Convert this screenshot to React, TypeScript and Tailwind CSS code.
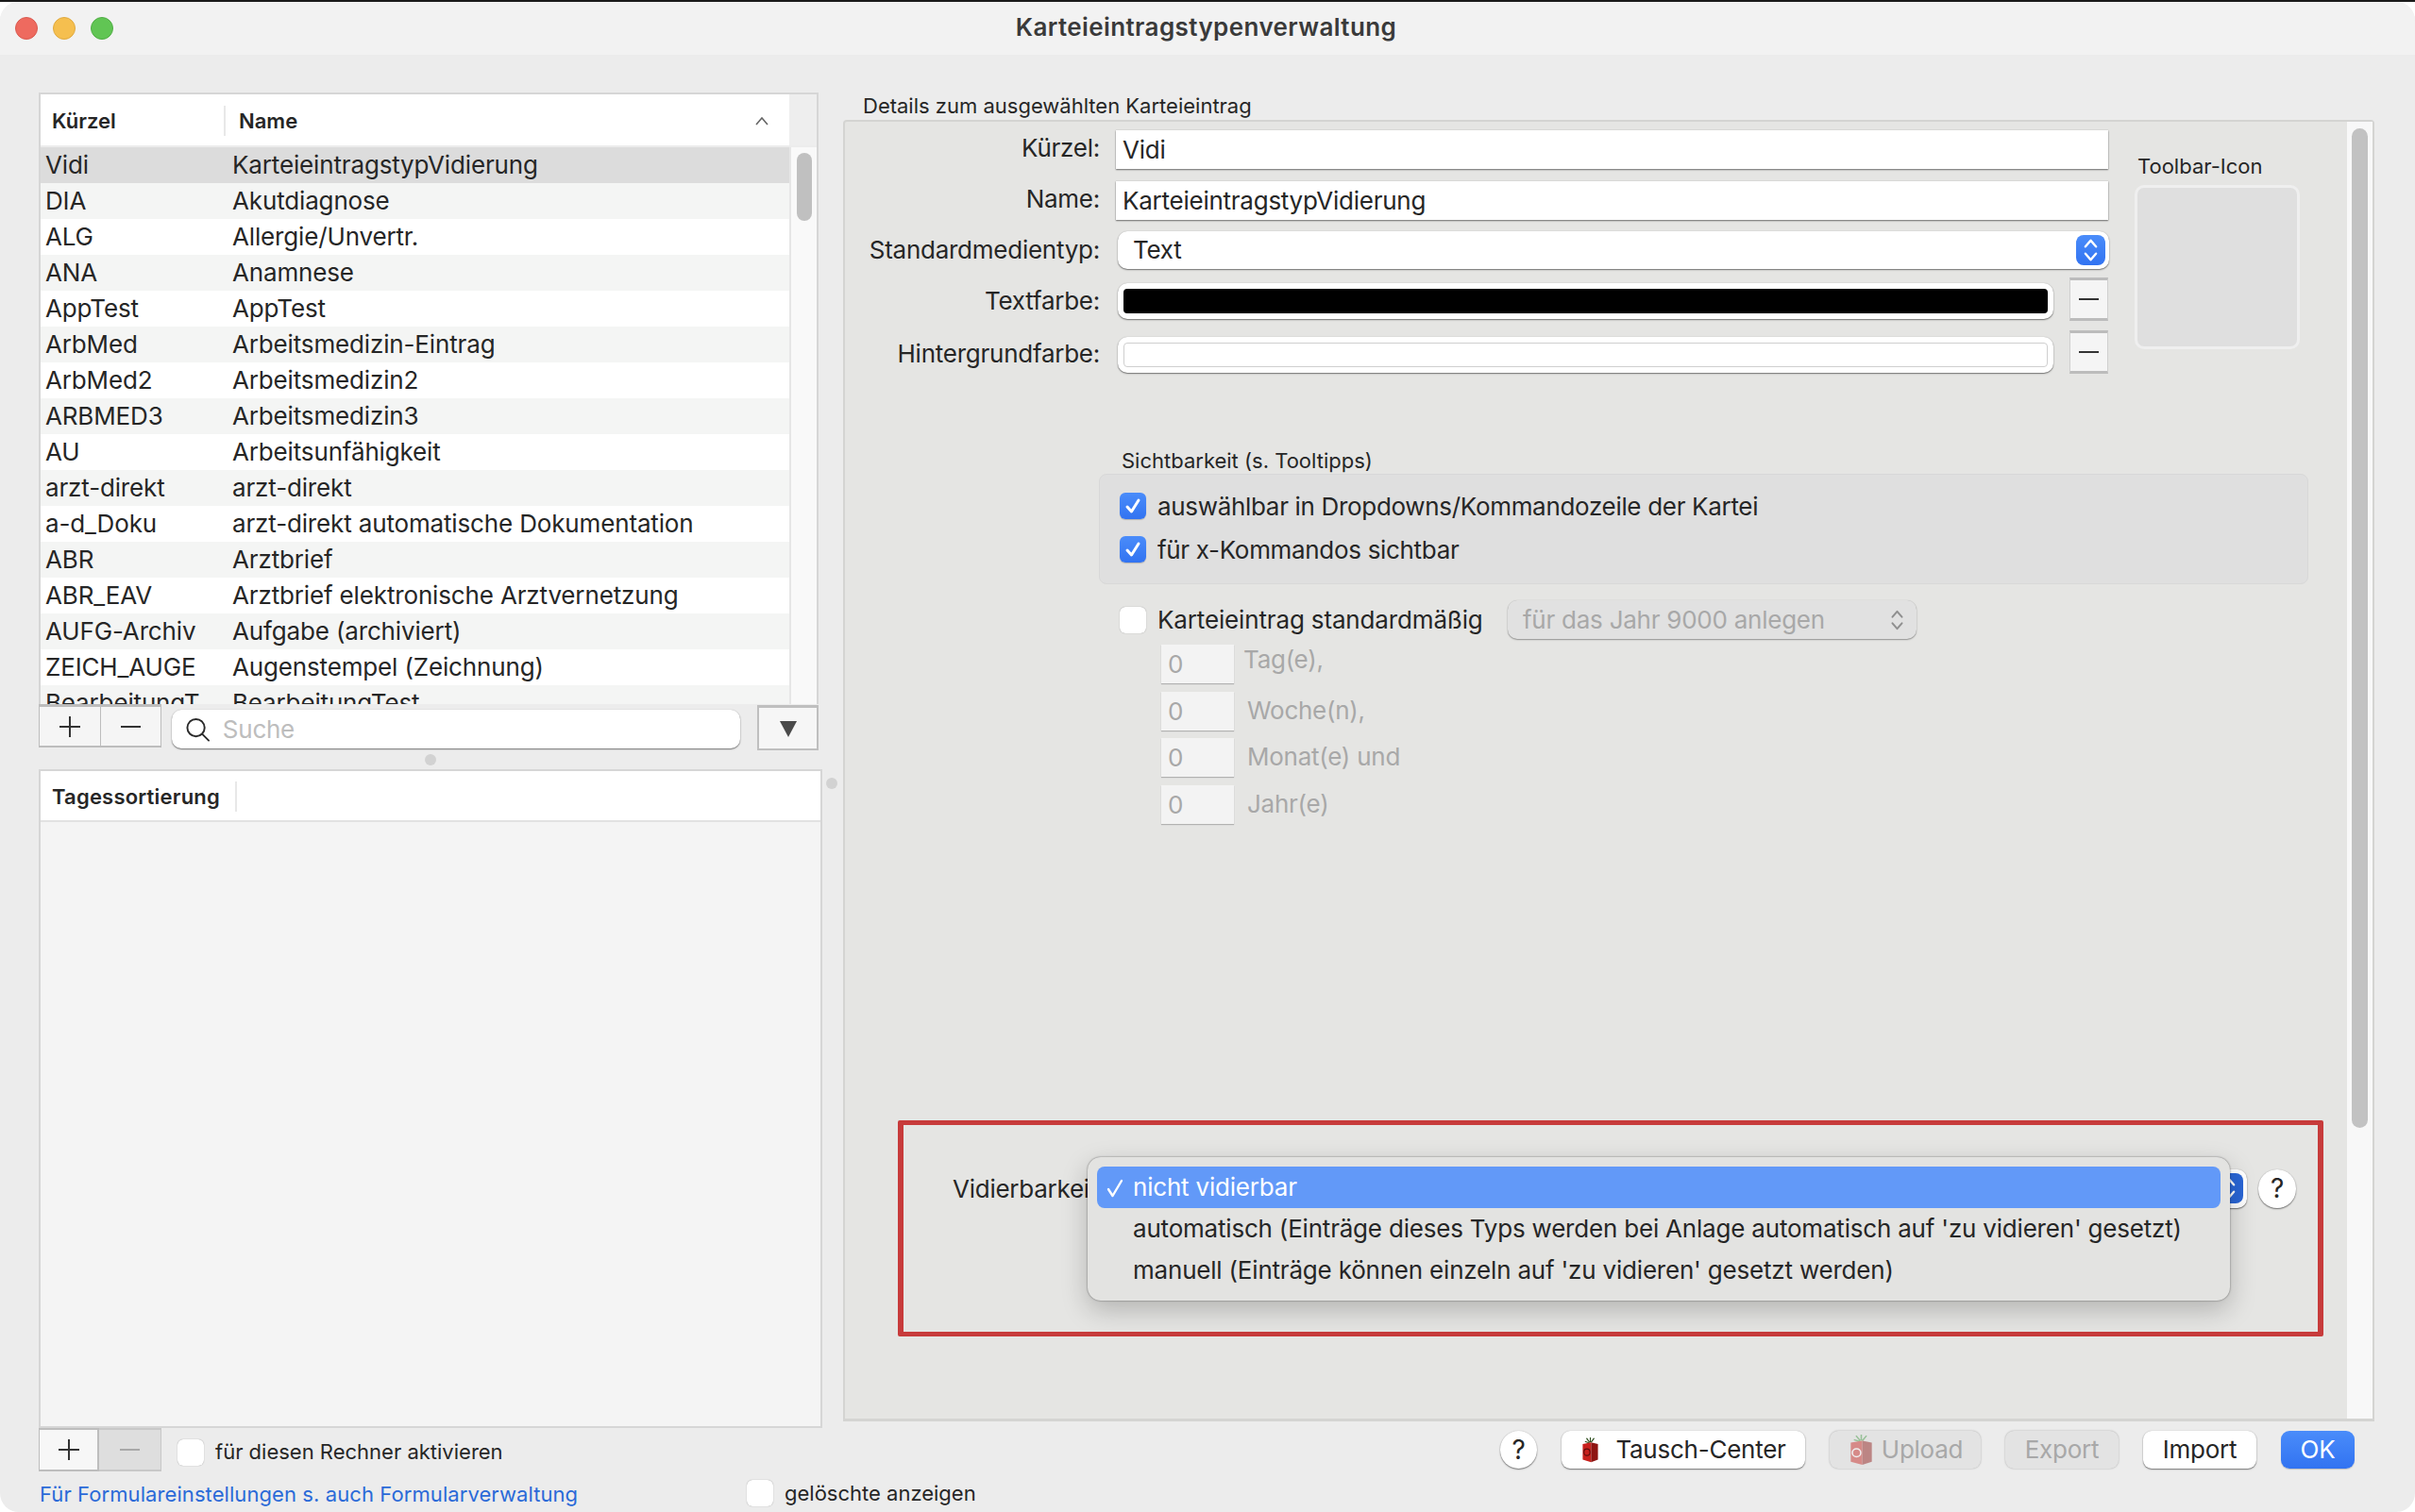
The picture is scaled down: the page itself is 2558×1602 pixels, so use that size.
import React from "react";

const rows: [string, string][] = [
  ["Vidi", "KarteieintragstypVidierung"],
  ["DIA", "Akutdiagnose"],
  ["ALG", "Allergie/Unvertr."],
  ["ANA", "Anamnese"],
  ["AppTest", "AppTest"],
  ["ArbMed", "Arbeitsmedizin-Eintrag"],
  ["ArbMed2", "Arbeitsmedizin2"],
  ["ARBMED3", "Arbeitsmedizin3"],
  ["AU", "Arbeitsunfähigkeit"],
  ["arzt-direkt", "arzt-direkt"],
  ["a-d_Doku", "arzt-direkt automatische Dokumentation"],
  ["ABR", "Arztbrief"],
  ["ABR_EAV", "Arztbrief elektronische Arztvernetzung"],
  ["AUFG-Archiv", "Aufgabe (archiviert)"],
  ["ZEICH_AUGE", "Augenstempel (Zeichnung)"],
  ["BearbeitungT", "BearbeitungTest"],
];

const fieldShadow = "shadow-[0_1px_1.5px_rgba(0,0,0,0.5),0_0_1px_rgba(0,0,0,0.25)]";

function Chevrons({ color, w = 18, h = 30, sw = 2.6 }: { color: string; w?: number; h?: number; sw?: number }) {
  return (
    <svg width={w} height={h} viewBox="0 0 18 30" fill="none" stroke={color} strokeWidth={sw} strokeLinecap="round" strokeLinejoin="round">
      <path d="M3 11 L9 4 L15 11" />
      <path d="M3 19 L9 26 L15 19" />
    </svg>
  );
}

function Stepper({ dark }: { dark?: boolean }) {
  return (
    <div className={`w-[31px] h-[32px] rounded-[8px] flex items-center justify-center ${dark ? "bg-[#2a66d6]" : "bg-gradient-to-b from-[#4a8cfa] to-[#3273f1]"}`}>
      <Chevrons color="#ffffff" w={17} h={28} />
    </div>
  );
}

function Check({ checked }: { checked?: boolean }) {
  return checked ? (
    <div className="w-[28px] h-[28px] rounded-[6px] bg-gradient-to-b from-[#4a8cfa] to-[#3273f1] flex items-center justify-center shadow-[0_1px_1px_rgba(0,0,0,0.2)] shrink-0">
      <svg width="20" height="20" viewBox="0 0 20 20" fill="none" stroke="#ffffff" strokeWidth="3" strokeLinecap="round" strokeLinejoin="round">
        <path d="M4 11 L8.5 16 L16 4" />
      </svg>
    </div>
  ) : (
    <div className="w-[28px] h-[28px] rounded-[6px] bg-white shadow-[0_0_1px_rgba(0,0,0,0.45)] shrink-0" />
  );
}

function Label({ children, cls = "" }: { children: React.ReactNode; cls?: string }) {
  return <div className={`w-[288px] shrink-0 pr-[18px] text-right text-[26px] leading-[32px] text-[#262626] whitespace-nowrap ${cls}`}>{children}</div>;
}

function DisabledNumber({ label, labelClass }: { label: string; labelClass: string }) {
  return (
    <div className="flex items-center h-[41px]">
      <div className="w-[77px] h-[41px] bg-[#f3f3f3] shadow-[0_1px_1px_rgba(0,0,0,0.22)] flex items-center pl-[7px] text-[26px] text-[#a8a8a8]">0</div>
      <div className={`text-[26px] leading-[32px] text-[#a8a8a8] ${labelClass}`}>{label}</div>
    </div>
  );
}

function MinusBtn() {
  return (
    <div className="w-[41px] h-[46px] bg-[#f5f5f5] border-y-[3px] border-x border-[#bcbcbc] border-x-[#cfcfcf] flex items-center justify-center ml-[17px] shrink-0">
      <div className="w-[21px] h-[2px] bg-[#333333]" />
    </div>
  );
}

function Footer({ w, cls, children }: { w: number; cls: string; children: React.ReactNode }) {
  return (
    <div style={{ width: w }} className={`h-[40px] rounded-[9px] flex items-center justify-center text-[26px] leading-[32px] shrink-0 ${cls}`}>
      {children}
    </div>
  );
}

function Cube({ faded }: { faded?: boolean }) {
  return (
    <svg width={faded ? 29 : 21} height={faded ? 34 : 28} viewBox="0 0 26 32" preserveAspectRatio="none" className={faded ? "opacity-45 mr-[7px]" : "mr-[16px]"}>
      <path d="M13 1 L13 7 M8 2 L12 7 M18 2 L14 7 M6 6 L12 8" stroke={faded ? "#3f9a3f" : "#2f4f1f"} strokeWidth="1.4" fill="none" />
      <path d="M3 9 L14 7 L14 31 L3 28 Z" fill="#c8201c" />
      <path d="M14 7 L23 9 L23 28 L14 31 Z" fill="#8e1512" />
      <circle cx="8.5" cy="19" r="4" fill="none" stroke={faded ? "#ffffff" : "#5c0d0b"} strokeWidth="1.4" />
    </svg>
  );
}

export default function App() {
  return (
    <div className="w-[2558px] h-[1602px] bg-white overflow-hidden font-[family-name:Inter] text-[#262626] tracking-[-0.25px]">
      <div className="w-full h-[2px] bg-[#1a1a1a]" />
      <div className="w-[2558px] h-[1600px] bg-[#ececec] rounded-[20px] overflow-hidden flex flex-col">
        {/* Title bar */}
        <div className="h-[56px] bg-[#f2f2f2] flex items-center shrink-0 relative">
          <div className="flex gap-[16px] pl-[16px]">
            <div className="w-[24px] h-[24px] rounded-full bg-[#ee6a5f] border border-[#d95a50]" />
            <div className="w-[24px] h-[24px] rounded-full bg-[#f5bf4f] border border-[#dfa93f]" />
            <div className="w-[24px] h-[24px] rounded-full bg-[#61c554] border border-[#50ad45]" />
          </div>
          <div className="flex-1 text-center text-[26px] font-semibold text-[#3a3a3a] pr-[123px] mt-[-3px] tracking-[0.4px]">Karteieintragstypenverwaltung</div>
        </div>

        {/* Body */}
        <div className="flex flex-1 pl-[41px]">
          {/* Left column */}
          <div className="w-[830px] shrink-0 flex flex-col pt-[40px]">
            <div className="w-[826px] h-[648px] border-2 border-b-0 border-[#d6d6d6] flex flex-col overflow-hidden box-border">
              <div className="flex h-[54px] shrink-0 tracking-normal">
                <div className="w-[793px] bg-white flex items-center relative pt-[2px]">
                  <div className="w-[196px] pl-[12px] text-[22px] font-semibold text-[#262626] border-r-2 border-[#e8e8e8] h-[32px] flex items-center">Kürzel</div>
                  <div className="pl-[14px] text-[22px] font-semibold text-[#262626]">Name</div>
                  <svg width="16" height="10" viewBox="0 0 16 10" fill="none" stroke="#666666" strokeWidth="1.6" className="absolute left-[756px] top-[23px]">
                    <path d="M2 9 L8 2 L14 9" />
                  </svg>
                </div>
                <div className="flex-1 bg-[#eeeeee]" />
              </div>
              <div className="flex flex-1 mt-[2px] min-h-0">
                <div className="w-[793px] overflow-hidden tracking-[-0.15px]">
                  {rows.map((r, i) => (
                    <div key={r[0]} className={`h-[38px] flex items-center pl-[5px] text-[26px] leading-[38px] text-[#262626] whitespace-nowrap ${i === 0 ? "bg-[#dcdcdc]" : i % 2 === 1 ? "bg-[#f4f5f4]" : "bg-white"}`}>
                      <div className="w-[198px] shrink-0">{r[0]}</div>
                      <div>{r[1]}</div>
                    </div>
                  ))}
                </div>
                <div className="flex-1 bg-[#f9f9f9] border-l-2 border-[#e6e6e6] pl-[6px] pt-[6px]">
                  <div className="w-[16px] h-[72px] rounded-full bg-[#c0c0c0]" />
                </div>
              </div>
            </div>

            {/* list toolbar */}
            <div className="w-[826px] flex items-start h-[49px]">
              <div className="flex w-[130px] h-[46px] bg-[#f5f5f5] border-t-[3px] border-b-[2px] border-x border-[#bdbdbd]">
                <div className="w-[65px] flex items-center justify-center border-r border-[#bdbdbd]">
                  <svg width="22" height="22" viewBox="0 0 22 22" stroke="#333333" strokeWidth="2"><path d="M11 0 V22 M0 11 H22" /></svg>
                </div>
                <div className="flex-1 flex items-center justify-center">
                  <div className="w-[21px] h-[2px] bg-[#333333]" />
                </div>
              </div>
              <div className={`ml-[11px] mt-[6px] w-[603px] h-[41px] bg-white rounded-[10px] flex items-center pl-[14px] ${fieldShadow}`}>
                <svg width="27" height="28" viewBox="0 0 28 28" fill="none" stroke="#2b2b2b" strokeWidth="2">
                  <circle cx="12" cy="12" r="9.5" />
                  <path d="M19 19 L26 26" strokeLinecap="round" />
                </svg>
                <span className="ml-[13px] text-[26px] text-[#bdbdbd]">Suche</span>
              </div>
              <div className="ml-[18px] mt-[1px] w-[65px] h-[48px] bg-[#f6f6f6] border-2 border-t-[3px] border-[#bfbfbf] flex items-center justify-center">
                <svg width="18" height="18" viewBox="0 0 18 18"><path d="M0 1 H18 L9 18 Z" fill="#4a4a4a" /></svg>
              </div>
            </div>

            <div className="h-[20px] flex items-center pl-[409px]">
              <div className="w-[12px] h-[12px] rounded-full bg-[#d2d2d2]" />
            </div>

            {/* Tagessortierung */}
            <div className="w-[830px] h-[698px] border-2 border-[#d6d6d6] bg-[#f4f4f4] flex flex-col box-border tracking-normal">
              <div className="h-[54px] bg-white border-b-2 border-[#e2e2e2] flex items-center shrink-0 pt-[2px]">
                <div className="pl-[12px] pr-[16px] h-[32px] flex items-center text-[22px] font-semibold text-[#262626] border-r-2 border-[#e8e8e8] whitespace-nowrap tracking-[0.2px]">Tagessortierung</div>
              </div>
            </div>

            {/* Bottom left controls */}
            <div className="flex items-center h-[46px] tracking-normal">
              <div className="flex h-[46px]">
                <div className="w-[64px] bg-[#f7f7f7] border-y-[2px] border-r-2 border-l border-[#bdbdbd] flex items-center justify-center">
                  <svg width="22" height="22" viewBox="0 0 22 22" stroke="#333333" strokeWidth="2"><path d="M11 0 V22 M0 11 H22" /></svg>
                </div>
                <div className="w-[66px] bg-[#dedede] border-y-[2px] border-r border-[#c8c8c8] flex items-center justify-center">
                  <div className="w-[21px] h-[2px] bg-[#a8a8a8]" />
                </div>
              </div>
              <div className="ml-[17px] mt-[6px]"><Check /></div>
              <div className="ml-[12px] text-[22px] text-[#262626] mt-[5px] whitespace-nowrap">für diesen Rechner aktivieren</div>
            </div>
            <div className="flex items-center h-[37px] pt-[9px] tracking-normal">
              <div className="w-[750px] shrink-0 pl-[1px] text-[22px] text-[#2a6ad8] whitespace-nowrap tracking-[0.08px] mt-[3px]">Für Formulareinstellungen s. auch Formularverwaltung</div>
              <Check />
              <div className="ml-[12px] text-[22px] text-[#262626] whitespace-nowrap">gelöschte anzeigen</div>
            </div>
          </div>

          {/* Gap column with splitter dot */}
          <div className="w-[22px] shrink-0 pt-[766px] pl-[4px]">
            <div className="w-[12px] h-[12px] rounded-full bg-[#d2d2d2]" />
          </div>

          {/* Right column */}
          <div className="w-[1622px] shrink-0 flex flex-col pt-[41px]">
            <div className="h-[28px] pl-[21px] text-[22px] leading-[26px] text-[#262626] whitespace-nowrap tracking-normal">Details zum ausgewählten Karteieintrag</div>
            <div className="h-[1379px] bg-[#e5e5e3] border-2 border-[#d4d4d2] border-b-[3px] rounded-t-[4px] flex box-border">
              <div className="flex-1 flex flex-col min-w-0">
                {/* Top form + Toolbar icon */}
                <div className="flex">
                  <div className="flex flex-col w-[1339px] pt-[9px]">
                    <div className="flex items-center h-[41px]">
                      <Label cls="mt-[-3px]">Kürzel:</Label>
                      <div className={`w-[1051px] ml-[-1px] h-[41px] bg-white flex items-center pl-[7px] text-[26px] ${fieldShadow}`}>Vidi</div>
                    </div>
                    <div className="flex items-center h-[41px] mt-[13px]">
                      <Label cls="mt-[-3px]">Name:</Label>
                      <div className={`w-[1051px] ml-[-1px] h-[41px] bg-white flex items-center pl-[7px] text-[26px] ${fieldShadow}`}>KarteieintragstypVidierung</div>
                    </div>
                    <div className="flex items-center h-[40px] mt-[12px]">
                      <Label>Standardmedientyp:</Label>
                      <div className={`w-[1050px] ml-[1px] h-[40px] bg-white rounded-[10px] flex items-center justify-between pl-[16px] pr-[4px] text-[26px] ${fieldShadow}`}>
                        <span className="mt-[-2px]">Text</span>
                        <Stepper />
                      </div>
                    </div>
                    <div className="flex items-center h-[46px] mt-[9px]">
                      <Label cls="mt-[4px]">Textfarbe:</Label>
                      <div className={`w-[991px] ml-[1px] mt-[4px] h-[38px] bg-white rounded-[10px] p-[6px] ${fieldShadow}`}>
                        <div className="w-full h-full bg-black rounded-[4px]" />
                      </div>
                      <MinusBtn />
                    </div>
                    <div className="flex items-center h-[46px] mt-[10px]">
                      <Label cls="mt-[4px]">Hintergrundfarbe:</Label>
                      <div className={`w-[991px] ml-[1px] mt-[6px] h-[38px] bg-white rounded-[10px] p-[6px] ${fieldShadow}`}>
                        <div className="w-full h-full bg-white border border-[#cfcfcf] rounded-[4px]" />
                      </div>
                      <MinusBtn />
                    </div>
                  </div>
                  <div className="ml-[27px] pt-[31px] flex flex-col tracking-normal">
                    <div className="h-[36px] pl-[3px] text-[22px] leading-[32px] text-[#262626] whitespace-nowrap">Toolbar-Icon</div>
                    <div className="w-[175px] h-[174px] bg-[#dfdfdf] border-[3px] border-[#efefef] rounded-[10px]" />
                  </div>
                </div>

                {/* Sichtbarkeit */}
                <div className="ml-[293px] mt-[78px] h-[28px] text-[22px] leading-[28px] text-[#262626] whitespace-nowrap tracking-normal">Sichtbarkeit (s. Tooltipps)</div>
                <div className="ml-[269px] w-[1281px] h-[117px] bg-[#dfdfdf] border border-[#d8d8d8] rounded-[8px] pl-[21px] pt-[19px] flex flex-col gap-[18px]">
                  <div className="flex items-center h-[28px]"><Check checked /><span className="ml-[12px] text-[26px] whitespace-nowrap tracking-[-0.32px]">auswählbar in Dropdowns/Kommandozeile der Kartei</span></div>
                  <div className="flex items-center h-[28px]"><Check checked /><span className="ml-[12px] text-[26px] whitespace-nowrap tracking-[-0.32px]">für x-Kommandos sichtbar</span></div>
                </div>

                {/* Standardmäßig */}
                <div className="ml-[291px] mt-[17px] flex items-center h-[41px]">
                  <Check />
                  <span className="ml-[12px] w-[371px] shrink-0 text-[26px] whitespace-nowrap tracking-[-0.15px] mt-[-1px]">Karteieintrag standardmäßig</span>
                  <div className="w-[433px] h-[41px] bg-[#e1e1e1] rounded-[10px] shadow-[0_1px_1.5px_rgba(0,0,0,0.35),0_0_1px_rgba(0,0,0,0.2)] flex items-center justify-between pl-[16px] pr-[13px] text-[26px] text-[#a8a8a8]">
                    <span className="whitespace-nowrap mt-[-1px]">für das Jahr 9000 anlegen</span>
                    <Chevrons color="#8f8f8f" w={15} h={26} sw={2.4} />
                  </div>
                </div>
                <div className="ml-[335px] mt-[6px] flex flex-col gap-[8.67px]">
                  <DisabledNumber label="Tag(e)," labelClass="ml-[10px] mt-[-10px]" />
                  <DisabledNumber label="Woche(n)," labelClass="ml-[14px]" />
                  <DisabledNumber label="Monat(e) und" labelClass="ml-[14px] mt-[-1px]" />
                  <DisabledNumber label="Jahr(e)" labelClass="ml-[14px]" />
                </div>

                {/* Red annotation */}
                <div className="ml-[56px] mt-[314px] w-[1510px] h-[229px] border-x-[6px] border-y-[5px] border-[#c73b3b] rounded-[2px] relative pt-[47px] pl-[52px] box-border">
                  <div className="flex items-center h-[41px]">
                    <div className="w-[175px] shrink-0 text-[26px] whitespace-nowrap overflow-hidden">Vidierbarkeit:</div>
                    <div className={`w-[1196px] h-[41px] bg-white rounded-[10px] flex items-center justify-end pr-[4px] ${fieldShadow}`}>
                      <Stepper dark />
                    </div>
                    <div className={`ml-[12px] w-[40px] h-[41px] rounded-full bg-white flex items-center justify-center text-[28px] text-[#262626] ${fieldShadow}`}>?</div>
                  </div>
                  <div className="absolute left-[195px] top-[34px] w-[1210px] h-[152px] bg-[#e3e3e1] rounded-[14px] p-[10px] shadow-[0_0_2px_rgba(0,0,0,0.55),0_10px_28px_rgba(0,0,0,0.22)] flex flex-col text-[26px] text-[#262626] tracking-[-0.2px]">
                    <div className="h-[44px] bg-[#6299f8] rounded-[8px] flex items-center text-white relative pl-[38px] whitespace-nowrap">
                      <svg width="18" height="20" viewBox="0 0 18 20" fill="none" stroke="#ffffff" strokeWidth="2.4" strokeLinecap="round" strokeLinejoin="round" className="absolute left-[10px] top-[13px]">
                        <path d="M2 11 L6.5 18 L16 2" />
                      </svg>
                      nicht vidierbar
                    </div>
                    <div className="h-[44px] flex items-center pl-[38px] whitespace-nowrap">automatisch (Einträge dieses Typs werden bei Anlage automatisch auf 'zu vidieren' gesetzt)</div>
                    <div className="h-[44px] flex items-center pl-[38px] whitespace-nowrap">manuell (Einträge können einzeln auf 'zu vidieren' gesetzt werden)</div>
                  </div>
                </div>
              </div>
              {/* panel scroll gutter */}
              <div className="w-[27px] shrink-0 bg-[#f8f8f8] pl-[5px] pt-[7px]">
                <div className="w-[17px] h-[1059px] rounded-full bg-[#c2c2c2]" />
              </div>
            </div>

            {/* Footer buttons */}
            <div className="flex justify-end items-center gap-[26px] pr-[21px] mt-[10px]">
              <div className={`w-[39px] h-[40px] rounded-full bg-white flex items-center justify-center text-[28px] ${fieldShadow}`}>?</div>
              <Footer w={258} cls={`bg-white ${fieldShadow}`}><Cube />Tausch-Center</Footer>
              <Footer w={160} cls="bg-[#e3e3e3] text-[#a8a8a8] shadow-[0_0_2px_rgba(0,0,0,0.3)]"><Cube faded />Upload</Footer>
              <Footer w={120} cls="bg-[#e3e3e3] text-[#a8a8a8] shadow-[0_0_2px_rgba(0,0,0,0.3)]">Export</Footer>
              <Footer w={120} cls={`bg-white ${fieldShadow}`}>Import</Footer>
              <Footer w={78} cls="bg-gradient-to-b from-[#4a8cfa] to-[#3273f1] text-white shadow-[0_1px_1px_rgba(0,0,0,0.2)]">OK</Footer>
            </div>
          </div>
        </div>
      </div>
    </div>
  );
}
